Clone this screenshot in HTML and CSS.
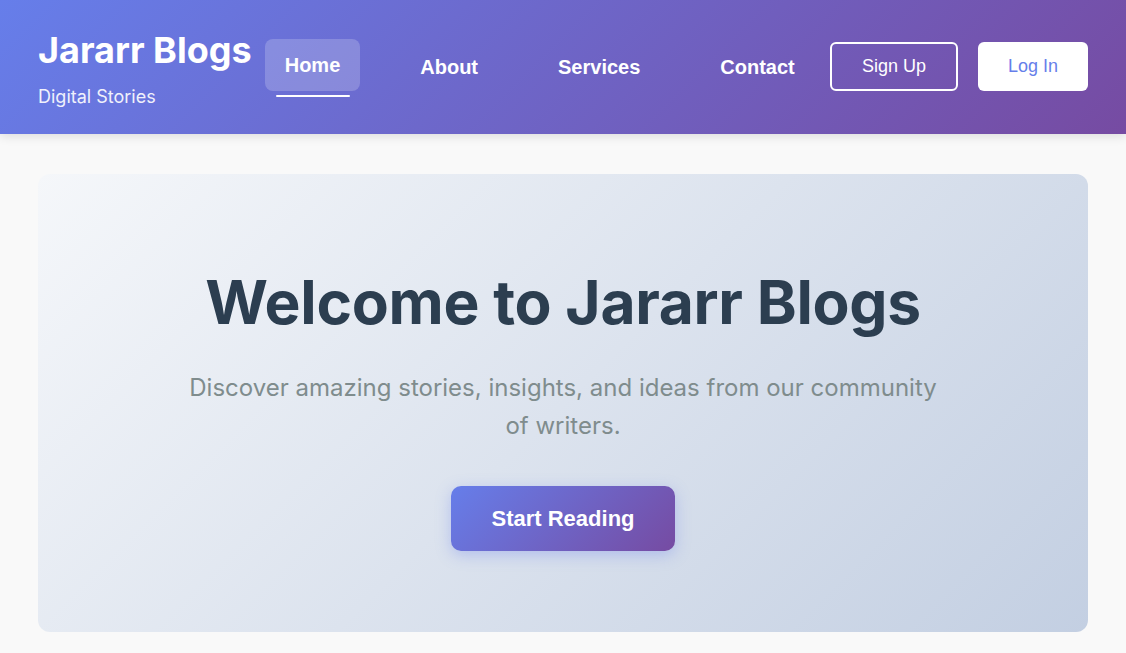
FILE: index.html
```html
<!DOCTYPE html>
<html lang="en">
<head>
<meta charset="utf-8">
<title>Jararr Blogs</title>
<link rel="stylesheet" href="styles.css">
</head>
<body>
<header class="site-header">
  <div class="brand">
    <h1 class="brand-title">Jararr Blogs</h1>
    <p class="brand-sub">Digital Stories</p>
  </div>
  <nav class="main-nav">
    <a class="nav-link active" href="#">Home</a>
    <a class="nav-link" href="#">About</a>
    <a class="nav-link" href="#">Services</a>
    <a class="nav-link" href="#">Contact</a>
  </nav>
  <div class="auth">
    <button class="btn-outline">Sign Up</button>
    <button class="btn-solid">Log In</button>
  </div>
</header>
<main class="content">
  <section class="hero">
    <h2 class="hero-title">Welcome to Jararr Blogs</h2>
    <p class="hero-text">Discover amazing stories, insights, and ideas from our community of writers.</p>
    <button class="hero-btn">Start Reading</button>
  </section>
</main>
</body>
</html>
```

FILE: styles.css
```css
* { box-sizing: border-box; }
html, body { margin: 0; padding: 0; }
body {
  background: #f9f9f9;
  font-family: Inter, "Noto Sans", sans-serif;
  color: #2c3e50;
}
.site-header {
  height: 134px;
  padding: 0 38px;
  display: flex;
  align-items: center;
  background: linear-gradient(135deg, #667eea 0%, #764ba2 100%);
  box-shadow: 0 2px 10px rgba(0,0,0,0.12);
  color: #fff;
}
.brand { display: flex; flex-direction: column; margin-top: 2px; }
.brand-title {
  margin: 0;
  font-size: 36px;
  font-weight: 700;
  line-height: 44px;
}
.brand-sub {
  margin: 14px 0 0;
  font-size: 18px;
  line-height: 22px;
  opacity: 0.9;
}
.main-nav {
  display: flex;
  gap: 40px;
  margin-left: 13px;
  align-items: center;
}
.nav-link {
  position: relative;
  display: block;
  padding: 0 20px;
  height: 52px;
  line-height: 52px;
  border-radius: 8px;
  color: #fff;
  text-decoration: none;
  font-family: "Liberation Sans", Arial, sans-serif;
  font-weight: 700;
  font-size: 20px;
}
.nav-link.active {
  background: rgba(255,255,255,0.2);
  transform: translateY(-2px);
}
.nav-link.active::after {
  content: "";
  position: absolute;
  left: 11px;
  right: 10px;
  bottom: -6px;
  height: 2px;
  background: #fff;
  border-radius: 1px;
}
.auth {
  margin-left: auto;
  display: flex;
  gap: 20px;
  margin-top: -2px;
}
.btn-outline, .btn-solid {
  font-family: "Liberation Sans", Arial, sans-serif;
  font-size: 18px;
  height: 49px;
  padding: 0 30px;
  border-radius: 6px;
  cursor: pointer;
}
.btn-outline { background: transparent; color: #fff; border: 2px solid #fff; }
.btn-solid { background: #fff; color: #667eea; border: none; }
.content { padding: 40px 38px 20px; }
.hero {
  background: linear-gradient(135deg, #f5f7fa 0%, #c3cfe2 100%);
  border-radius: 12px;
  padding: 92px 40px 80px;
  text-align: center;
  height: 458px;
}
.hero-title {
  margin: 0;
  font-size: 60.5px;
  line-height: 72px;
  font-weight: 700;
  color: #2c3e50;
  letter-spacing: -0.3px;
}
.hero-text {
  margin: 31px auto 0;
  max-width: 760px;
  font-size: 24px;
  line-height: 38px;
  color: #7f8c8d;
}
.hero-btn {
  margin-top: 41px;
  font-family: "Liberation Sans", Arial, sans-serif;
  font-weight: 700;
  font-size: 22px;
  padding: 20px 40px;
  line-height: 25px;
  border: none;
  border-radius: 10px;
  color: #fff;
  background: linear-gradient(135deg, #667eea 0%, #764ba2 100%);
  box-shadow: 0 4px 15px rgba(102,126,234,0.35);
  cursor: pointer;
}
```
